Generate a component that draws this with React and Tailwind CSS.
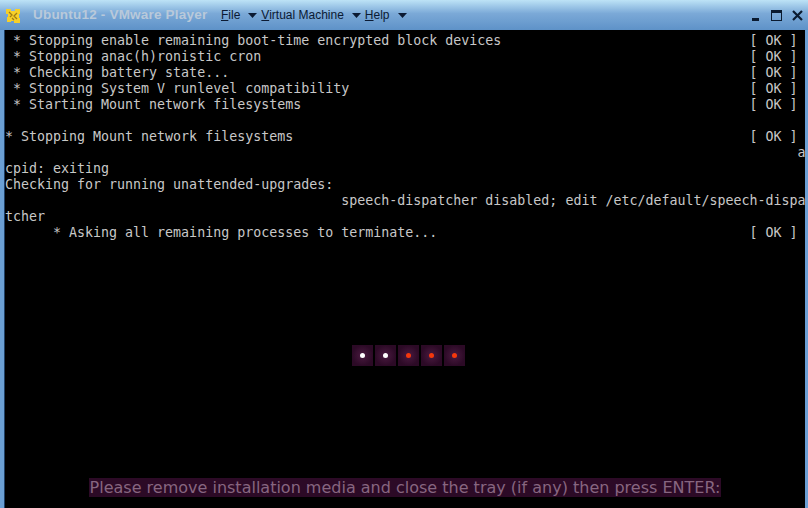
import React from 'react';

const ok = '[ OK ]';

// each row is 100 columns wide, same as the guest console
const row = (text, status) => (status ? text.padEnd(93, ' ') + status : text);

const consoleLines = [
  row(' * Stopping enable remaining boot-time encrypted block devices', ok),
  row(' * Stopping anac(h)ronistic cron', ok),
  row(' * Checking battery state...', ok),
  row(' * Stopping System V runlevel compatibility', ok),
  row(' * Starting Mount network filesystems', ok),
  '',
  row('* Stopping Mount network filesystems', ok),
  ' '.repeat(99) + 'a',
  'cpid: exiting',
  'Checking for running unattended-upgrades:',
  ' '.repeat(42) + 'speech-dispatcher disabled; edit /etc/default/speech-dispa',
  'tcher',
  row('      * Asking all remaining processes to terminate...', ok),
];

const dots = ['bg-white', 'bg-white', 'bg-[#f5380c]', 'bg-[#f5380c]', 'bg-[#f5380c]'];

const MenuItem = ({ letter, rest }) => (
  <div className="flex items-center gap-2">
    <span>
      <span className="underline">{letter}</span>
      {rest}
    </span>
    <svg width="9" height="5" viewBox="0 0 9 5" className="mt-px">
      <path d="M0 0h9L4.5 5z" fill="#0b1a33" />
    </svg>
  </div>
);

const App = () => {
  return (
    <div className="w-[808px] h-[508px] flex flex-col overflow-hidden bg-[#6b9fd4]">
      {/* TITLE BAR */}
      <div className="h-[30px] shrink-0 flex items-center pl-[5px] pr-[5px] bg-gradient-to-b from-[#bde3f6] via-[#7ba9d7] via-[45%] to-[#5e92c8] font-['Liberation_Sans',sans-serif]">
        <svg width="16" height="16" viewBox="0 0 16 16" className="mt-0.5">
          <path d="M1 1h5v2h4V1h5v5h-1v4h1v5H9v-2H6v1H2V9h1V6H1z" fill="#f6d02a" />
          <path d="M4 4l3 3-2 2M12 5L9 8l3 3M7 10l2 2" stroke="#a07c14" strokeWidth="1.3" fill="none" />
        </svg>
        <span className="ml-3 w-[188px] text-[13.5px] tracking-[0.2px] font-bold text-[#b9c9da] whitespace-nowrap">Ubuntu12 - VMware Player</span>
        <div className="flex items-center gap-1 text-[12px] text-[#0b1a33]">
          <MenuItem letter="F" rest="ile" />
          <MenuItem letter="V" rest="irtual Machine" />
          <MenuItem letter="H" rest="elp" />
        </div>
        <div className="ml-auto flex items-center text-[#0a1a30]">
          <div className="w-[7px] h-[3px] mt-[9px] mr-3 bg-current" />
          <div className="w-[11px] h-[11px] mt-px mr-[10px] border border-current border-t-[3px]" />
          <svg width="11" height="11" viewBox="0 0 11 11" className="mt-px">
            <path d="M1 1l9 9M10 1l-9 9" stroke="currentColor" strokeWidth="2.2" />
          </svg>
        </div>
      </div>

      {/* GUEST SCREEN */}
      <div className="flex-1 ml-1 mr-[3px] pt-[3px] border-l border-[#1d3f66] bg-black flex flex-col overflow-hidden font-['DejaVu_Sans_Mono',monospace] text-[13.3px] leading-4 text-[#c8c8c8]">
        <div>
          {consoleLines.map((line, i) => (
            <div key={i} className="h-4 whitespace-pre">{line}</div>
          ))}
        </div>

        <div className="mt-[104px] flex justify-center gap-0.5 pl-[7px]">
          {dots.map((color, i) => (
            <div key={i} className="w-[21px] h-[21px] flex items-center justify-center bg-[radial-gradient(circle,#4a1a40,#2c0a26_70%)]">
              <div className={`w-[5px] h-[5px] rounded-full ${color}`} />
            </div>
          ))}
        </div>

        <div className="mt-[112px] flex justify-center">
          <span className="px-px h-[19px] flex items-center bg-[#2c0a26] text-[#876680] text-[16px] font-['DejaVu_Sans',sans-serif] whitespace-pre">
            Please remove installation media and close the tray (if any) then press ENTER:
          </span>
        </div>
      </div>
    </div>
  );
};

export default App;
